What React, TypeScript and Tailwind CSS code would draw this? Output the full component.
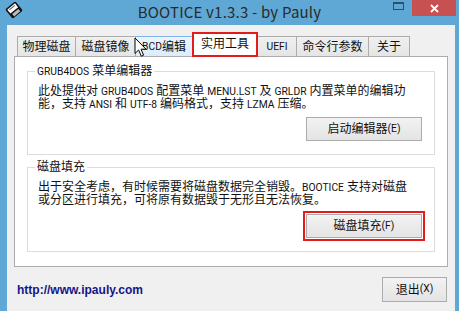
import type { ReactNode } from "react";

// Latin runs are set a little smaller, the way YaHei draws them next to CJK
const L = ({ children }: { children: ReactNode }) => (
  <span className="text-[10.3px]">{children}</span>
);

const tabs: { label: ReactNode; cls: string; hover?: boolean; active?: boolean }[] = [
  { label: "物理磁盘", cls: "w-[59px]" },
  { label: "磁盘镜像", cls: "w-[61px] -ml-px" },
  { label: <><L>BCD</L> 编辑</>, cls: "w-[58px] -ml-px", hover: true },
  { label: "实用工具", cls: "w-[66px] -ml-px", active: true },
  { label: <L>UEFI</L>, cls: "w-[40px] -ml-px" },
  { label: "命令行参数", cls: "w-[73px] -ml-px" },
  { label: "关于", cls: "w-[42px] -ml-px" },
];

const AppIcon = () => (
  <svg width="18" height="18" viewBox="0 0 18 18" className="ml-[5px] mt-[1px]">
    <g transform="rotate(-40 9 9)">
      <rect x="2.5" y="3" width="13" height="12" rx="1.5" fill="#111" />
      <rect x="4" y="4.5" width="10" height="5" fill="#fff" />
      <rect x="5" y="11" width="8" height="3" fill="#bbb" />
      <rect x="5.5" y="5.5" width="7" height="1" fill="#555" />
    </g>
  </svg>
);

const Cursor = () => (
  <svg
    width="14"
    height="21"
    viewBox="0 0 14 21"
    className="absolute left-[134px] top-[37px] z-20"
  >
    <path
      d="M1 1 L1 16.5 L4.6 13 L7.3 19.2 L9.6 18.2 L7 12.2 L12 12.2 Z"
      fill="#fff"
      stroke="#000"
      strokeWidth="1"
      strokeLinejoin="miter"
    />
  </svg>
);

const Button = ({ label, cls }: { label: ReactNode; cls: string }) => (
  <div
    className={`flex items-center justify-center border border-[#acacac] bg-gradient-to-b from-[#f2f2f2] to-[#e4e4e4] text-[12px] leading-none text-[#111] ${cls}`}
  >
    {label}
  </div>
);

export default function App() {
  return (
    <div className="relative flex h-[311px] w-[459px] flex-col overflow-hidden bg-[#5fa8d6] font-['Roboto','Noto_Sans_CJK_SC',sans-serif]">
      {/* title bar */}
      <div className="grid h-[25px] grid-cols-[1fr_auto_1fr]">
        <div className="flex items-start">
          <AppIcon />
        </div>
        <div className="pt-[2px] font-['Noto_Sans_CJK_SC',sans-serif] text-[15px] leading-[20px] tracking-[0.2px] text-[#2a2a2a]">
          BOOTICE v1.3.3 - by Pauly
        </div>
        <div className="flex items-start justify-end pr-[3px]">
          <svg width="11" height="8" viewBox="0 0 11 8" className="mr-[8px] mt-[2px]">
            <rect x="0.5" y="0.5" width="10" height="7" fill="none" stroke="#2c4f6e" />
            <rect x="0" y="0" width="11" height="2" fill="#2c4f6e" />
          </svg>
          <div className="flex h-[16px] w-[44px] items-center justify-center bg-[#c75050]">
            <svg width="9" height="9" viewBox="0 0 9 9">
              <path d="M1 1 L8 8 M8 1 L1 8" stroke="#fff" strokeWidth="1.8" />
            </svg>
          </div>
        </div>
      </div>

      {/* client area */}
      <div className="ml-[7px] mr-[4px] flex flex-1 flex-col bg-[#f0f0f0]">
        <div className="ml-[10px] flex h-[31px] items-end pt-[7px]">
          {tabs.map((t, i) =>
            t.active ? (
              <div
                key={i}
                className={`relative z-10 -mb-px flex h-[25px] items-center justify-center border-2 border-[#e41b1b] bg-white pb-[2px] text-[12px] text-[#111] ${t.cls}`}
              >
                {t.label}
              </div>
            ) : (
              <div
                key={i}
                className={`flex h-[20px] items-center justify-center border border-b-0 text-[12px] text-[#111] ${
                  t.hover
                    ? "relative border-[#7eb4ea] bg-gradient-to-b from-[#ecf4fc] to-[#dcecfc]"
                    : "border-[#acacac] bg-gradient-to-b from-[#f0f0f0] to-[#e5e5e5]"
                } ${t.cls}`}
              >
                {t.label}
              </div>
            )
          )}
        </div>

        <div className="mx-[7px] h-[211px] border border-[#acacac] bg-white pt-[14px] text-[12px] text-[#111]">
          <div className="mx-[12px] h-[84px] border border-[#dcdcdc]">
            <div className="-mt-[8px] ml-[7px] w-fit bg-white px-[2px] leading-[14px]">
              <L>GRUB4DOS</L> 菜单编辑器
            </div>
            <div className="ml-[10px] mt-[6px] whitespace-nowrap leading-[13px]">
              此处提供对 <L>GRUB4DOS</L> 配置菜单 <L>MENU.LST</L> 及 <L>GRLDR</L> 内置菜单的编辑功
              <br />
              能，支持 <L>ANSI</L> 和 <L>UTF-8</L> 编码格式，支持 <L>LZMA</L> 压缩。
            </div>
            <div className="mr-[12px] mt-[6px] flex justify-end">
              <Button label={<>启动编辑器<L>(E)</L></>} cls="h-[24px] w-[116px]" />
            </div>
          </div>

          <div className="mx-[12px] mt-[12px] h-[85px] border border-[#dcdcdc]">
            <div className="-mt-[8px] ml-[7px] w-fit bg-white px-[2px] leading-[14px]">
              磁盘填充
            </div>
            <div className="ml-[10px] mt-[7px] whitespace-nowrap leading-[13px]">
              出于安全考虑，有时候需要将磁盘数据完全销毁。<L>BOOTICE</L> 支持对磁盘
              <br />
              或分区进行填充，可将原有数据毁于无形且无法恢复。
            </div>
            <div className="mr-[12px] mt-[7px] flex justify-end">
              <Button
                label={<>磁盘填充<L>(F)</L></>}
                cls="h-[24px] w-[116px] outline-2 outline-offset-[1px] outline-[#e41b1b]"
              />
            </div>
          </div>
        </div>

        <div className="mt-[10px] flex items-center justify-between pl-[10px] pr-[8px]">
          <div className="font-['Liberation_Sans',sans-serif] text-[12px] font-bold text-[#14148a]">
            http://www.ipauly.com
          </div>
          <Button label={<>退出<L>(X)</L></>} cls="h-[25px] w-[65px]" />
        </div>
      </div>

      <Cursor />
    </div>
  );
}
